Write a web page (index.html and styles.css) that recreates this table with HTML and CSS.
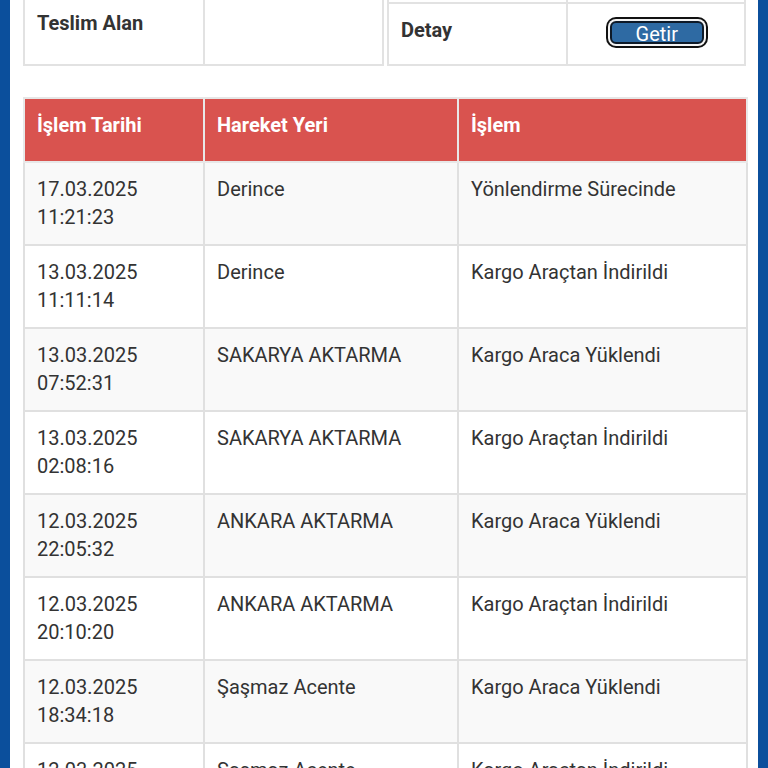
FILE: index.html
```html
<!DOCTYPE html>
<html lang="tr">
<head>
<meta charset="utf-8">
<link rel="stylesheet" href="styles.css">
</head>
<body>
<div class="page">
  <div class="info">
    <table class="info-table left">
      <tr><th class="tall">Teslim Alan</th><td></td></tr>
    </table>
    <table class="info-table right">
      <tr class="prev"><td></td><td></td></tr>
      <tr class="main"><th>Detay</th><td class="center"><button class="btn">Getir</button></td></tr>
    </table>
  </div>

  <table class="moves">
    <colgroup><col class="c1"><col class="c2"><col class="c3"></colgroup>
    <thead>
      <tr><th>İşlem Tarihi</th><th>Hareket Yeri</th><th>İşlem</th></tr>
    </thead>
    <tbody>
      <tr><td>17.03.2025<br>11:21:23</td><td>Derince</td><td>Yönlendirme Sürecinde</td></tr>
      <tr><td>13.03.2025<br>11:11:14</td><td>Derince</td><td>Kargo Araçtan İndirildi</td></tr>
      <tr><td>13.03.2025<br>07:52:31</td><td>SAKARYA AKTARMA</td><td>Kargo Araca Yüklendi</td></tr>
      <tr><td>13.03.2025<br>02:08:16</td><td>SAKARYA AKTARMA</td><td>Kargo Araçtan İndirildi</td></tr>
      <tr><td>12.03.2025<br>22:05:32</td><td>ANKARA AKTARMA</td><td>Kargo Araca Yüklendi</td></tr>
      <tr><td>12.03.2025<br>20:10:20</td><td>ANKARA AKTARMA</td><td>Kargo Araçtan İndirildi</td></tr>
      <tr><td>12.03.2025<br>18:34:18</td><td>Şaşmaz Acente</td><td>Kargo Araca Yüklendi</td></tr>
      <tr><td>12.03.2025<br>17:02:45</td><td>Şaşmaz Acente</td><td>Kargo Araçtan İndirildi</td></tr>
    </tbody>
  </table>
</div>
</body>
</html>
```
FILE: styles.css
```css
html, body {
  margin: 0;
  padding: 0;
  height: 100%;
  overflow: hidden;
}
body {
  background: #0b4f9c;
  font-family: Roboto, "Liberation Sans", Arial, sans-serif;
  color: #333;
  font-size: 20px;
  line-height: 28px;
}
.page {
  background: #fff;
  margin: 0 10px;
  min-height: 100%;
  padding: 0 12px 0 13px;
}
.info {
  display: flex;
  align-items: flex-end;
  gap: 3px;
  margin-top: -20px;
}
.info-table {
  border-collapse: collapse;
  table-layout: fixed;
}
.info-table.left { width: 361px; }
.info-table.right { width: 359px; }
.info-table th, .info-table td {
  border: 2px solid #e2e2e2;
  padding: 8px 12px;
  text-align: left;
  width: 50%;
}
.info-table th {
  font-weight: bold;
  vertical-align: middle;
}
.info-table th.tall {
  vertical-align: bottom;
  height: 40px;
  padding-top: 0;
  padding-bottom: 27px;
}
.info-table .prev td {
  height: 20px;
  padding: 0;
}
.info-table .main th,
.info-table .main td {
  height: 44px;
}
.info-table .main th {
  padding-bottom: 12px;
  padding-top: 4px;
}
.info-table .center { text-align: center; }
.btn {
  font-family: Roboto, "Liberation Sans", Arial, sans-serif;
  font-size: 20px;
  line-height: 20px;
  color: #fff;
  background: #2e6aa3;
  border: 2px solid #0e1a28;
  border-radius: 6px;
  box-shadow: 0 0 0 2px #f4f4f4, 0 0 0 4px #111;
  padding: 1px 22px 0;
  width: 94px;
  height: 23px;
  margin-top: 0;
  margin-bottom: 1px;
  margin-left: 2px;
}
.moves {
  margin-top: 31px;
  width: 723px;
  border-collapse: collapse;
  table-layout: fixed;
}
.moves .c1 { width: 180px; }
.moves .c2 { width: 254px; }
.moves .c3 { width: 289px; }
.moves th, .moves td {
  border: 2px solid #e0e0e0;
  text-align: left;
  vertical-align: top;
  padding: 12px 12px 13px;
}
.moves th {
  background: #d9534f;
  color: #fff;
  font-weight: bold;
  padding-bottom: 22px;
}
.moves thead th {
  border-color: #e8e8e8;
  border-top-color: #e6e6e6;
}
.moves tbody tr:nth-child(odd) td {
  background: #f9f9f9;
}
```
